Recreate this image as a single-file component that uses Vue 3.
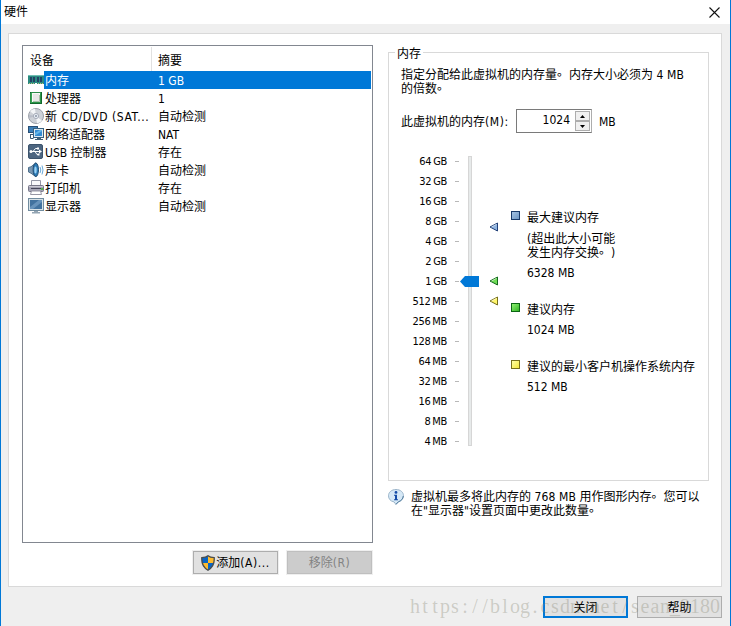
<script setup>
const devices = [
  { icon: 'memory', name: '内存', summary: '1 GB', selected: true },
  { icon: 'cpu', name: '处理器', summary: '1' },
  { icon: 'disc', name: '新 CD/DVD (SAT...', summary: '自动检测', wide: true },
  { icon: 'network', name: '网络适配器', summary: 'NAT' },
  { icon: 'usb', name: 'USB 控制器', summary: '存在' },
  { icon: 'sound', name: '声卡', summary: '自动检测' },
  { icon: 'printer', name: '打印机', summary: '存在' },
  { icon: 'display', name: '显示器', summary: '自动检测' },
]
const scale = ['64 GB', '32 GB', '16 GB', '8 GB', '4 GB', '2 GB', '1 GB', '512 MB', '256 MB', '128 MB', '64 MB', '32 MB', '16 MB', '8 MB', '4 MB']
const markers = [
  { cls: 'm-max', fill: '#8fb4e0', stroke: '#1f3f77' },
  { cls: 'm-rec', fill: '#6fdc55', stroke: '#12691c' },
  { cls: 'm-min', fill: '#fff56a', stroke: '#77701c' },
]
const watermark = 'https://blog.csdn.net/sean_9180'
// one fixed-width cell per character
const cells = [...watermark].map((_, i) => i * 10 + 5).join(' ')
</script>

<template>
  <div class="window">
    <header class="titlebar">
      <span>硬件</span>
      <svg class="close" width="11" height="11" viewBox="0 0 11 11"><path d="M.5 .5l10 10M10.5 .5l-10 10" stroke="#111" stroke-width="1.1" fill="none" /></svg>
    </header>

    <main class="panel">
      <section class="left">
        <div class="list">
          <div class="head"><span class="h1">设备</span><span class="h2">摘要</span></div>
          <div v-for="d in devices" :key="d.icon" class="row" :class="{ selected: d.selected, wide: d.wide }">
            <svg class="icon" width="16" height="16" viewBox="0 0 16 16">
              <g v-if="d.icon === 'memory'">
                <path d="M0 3h16v9H9v-1H7v1H0z" fill="#2b8a80" />
                <path d="M0 3.500h16" stroke="#70bdb2" />
                <path d="M2 5h2v5H2zM5 5h2v5H5zM9 5h2v5H9zM12 5h2v5h-2z" fill="#234264" />
                <path d="M1 11.500h5M10 11.500h6" stroke="#bcc27c" stroke-dasharray="1 1" />
              </g>
              <g v-else-if="d.icon === 'cpu'">
                <rect x="2.500" y="2.500" width="11" height="11" fill="#299447" stroke="#12672c" />
                <path d="M3 13V3h10" stroke="#48b565" fill="none" />
                <rect x="4.500" y="3.500" width="7" height="8" fill="#e7e7e5" stroke="#f8faf6" />
                <path d="M5 11.500h6.500V5" stroke="#a7bfa8" fill="none" />
              </g>
              <g v-else-if="d.icon === 'disc'">
                <circle cx="8" cy="8" r="7.500" fill="#cdd1d7" stroke="#9b9fa8" />
                <path d="M8 8L2 3.200A7.300 7.300 0 0 1 7 .8zM8 8l6 4.800a7.300 7.300 0 0 1-5 2.500z" fill="#f3f5f7" />
                <path d="M8 8L1 7a7 7 0 0 0 0 3z" fill="#b8bdc8" />
                <circle cx="8" cy="8" r="2.600" fill="#e8edf4" stroke="#a8aeba" />
                <circle cx="8" cy="8" r="1" fill="#8993a5" />
              </g>
              <g v-else-if="d.icon === 'network'">
                <rect x=".5" y=".5" width="9" height="6" fill="#3c7fb7" stroke="#274f77" />
                <path d="M2 8.500h3M2.500 9v3.500h3" stroke="#38576f" fill="none" />
                <rect x="5.500" y="2.500" width="10" height="9" fill="#d9e8f2" stroke="#376080" />
                <rect x="7" y="4" width="7" height="6" fill="#338bd1" />
                <path d="M7 7l5-3h2v1L8 9H7z" fill="#65b7e8" />
                <path d="M9 12.500h4M7 13.500h8" stroke="#416178" />
              </g>
              <g v-else-if="d.icon === 'usb'">
                <rect x=".5" y=".5" width="14" height="14" rx="1.500" fill="#4c6580" stroke="#3c536c" />
                <path d="M2 7.500h10M5 7.500l2.500-3h2M7 7.500l2 3h2" stroke="#fff" fill="none" />
                <circle cx="3" cy="7.500" r="1.500" fill="#fff" /><path d="M11 5.500l3 2-3 2zM9 3.500h2v2H9zM9.500 9.500h2v2h-2z" fill="#fff" />
              </g>
              <g v-else-if="d.icon === 'sound'">
                <path d="M.5 5.500L3 4.800 8 .8c2 2 2 11 0 14L3 11.200.5 10z" fill="#7897b2" stroke="#4d708d" />
                <ellipse cx="7.800" cy="7.800" rx="2.700" ry="6.700" fill="#2c7cb7" stroke="#274f73" />
                <ellipse cx="7.500" cy="8" rx="1.200" ry="3.500" fill="#9cd3f5" />
                <path d="M12 5q1.600 3 0 6M14 3.500q2 4.500 0 9" stroke="#6baad8" fill="none" />
              </g>
              <g v-else-if="d.icon === 'printer'">
                <path d="M3.500 6V.5h9V6" fill="#f8f8fc" stroke="#9497a7" />
                <rect x=".5" y="5.500" width="15" height="6" rx="1" fill="#a5a4b5" stroke="#777688" />
                <path d="M1 6.500h14" stroke="#cac9d5" /><path d="M3 8.500h10" stroke="#45455a" />
                <rect x="13" y="8" width="2" height="2" fill="#55b84a" />
                <path d="M3.500 11h9l1 3.500h-11z" fill="#fff" stroke="#9797a5" />
              </g>
              <g v-else>
                <rect x=".5" y=".5" width="15" height="12" fill="#d8e2e7" stroke="#718c9f" />
                <rect x="2" y="2" width="12" height="9" fill="#41729f" /><path d="M2 9l9-7h3v2L5 11H2z" fill="#6793bb" />
                <path d="M6 13h4v1h2v1.500H4V14h2z" fill="#94a5b3" />
              </g>
            </svg>
            <span class="name">{{ d.name }}</span>
            <span class="summary">{{ d.summary }}</span>
          </div>
        </div>
        <div class="actions">
          <button class="btn add">
            <svg width="14" height="16" viewBox="0 0 14 16">
              <path d="M7 .7C5 2.300 3 2.500.8 2.700c-.4 6 1.500 10 6.200 12.500 4.700-2.500 6.600-6.500 6.200-12.500C11 2.500 9 2.300 7 .7z" fill="#0865c5" />
              <path d="M7 1v7h6c.3-2 .2-3 .2-5.300C11 2.500 9 2.300 7 1zM7 8H1.200C2 11 3.500 13.500 7 15z" fill="#fdbb2e" />
              <path d="M7 .7C5 2.300 3 2.500.8 2.700c-.4 6 1.500 10 6.200 12.500 4.700-2.500 6.600-6.500 6.200-12.500C11 2.500 9 2.300 7 .7z" fill="none" stroke="#4b4d4d" stroke-width="1.300" />
            </svg>
            <span>添加<span class="key">(A)...</span></span>
          </button>
          <button class="btn disabled" disabled><span>移除<span class="key">(R)</span></span></button>
        </div>
      </section>

      <section class="right">
        <div class="group">
          <span class="caption">内存</span>
          <p class="desc">指定分配给此虚拟机的内存量<span class="stop">。</span>内存大小必须为 <span class="num">4 MB</span><br>的倍数<span class="stop">。</span></p>
          <div class="amount">
            <label>此虚拟机的内存<span class="key">(M):</span></label>
            <div class="spin">
              <span class="value">1024</span>
              <div class="arrows">
                <i><svg width="5" height="3" viewBox="0 0 5 3"><path d="M0 3L2.500 0 5 3z" /></svg></i>
                <i><svg width="5" height="3" viewBox="0 0 5 3"><path d="M0 0l2.500 3L5 0z" /></svg></i>
              </div>
            </div>
            <span class="unit">MB</span>
          </div>
          <div class="slider">
            <div class="scale">
              <div v-for="s in scale" :key="s" class="tick"><span>{{ s }}</span><i></i></div>
            </div>
            <div class="track">
              <svg class="thumb" width="19" height="11" viewBox="0 0 19 11"><path d="M0 5.500L5 0h14v11H5z" fill="#0078d7" /></svg>
            </div>
            <div class="markers">
              <svg v-for="m in markers" :key="m.cls" :class="m.cls" width="10" height="10" viewBox="0 0 10 10">
                <path d="M1 5L8.500 1v8z" :fill="m.fill" :stroke="m.stroke" /><path d="M2.500 5L7.500 2.300" stroke="#fff" stroke-opacity=".6" />
              </svg>
            </div>
            <div class="legend">
              <div class="item max"><i></i><div><p>最大建议内存</p><p>(超出此大小可能<br>发生内存交换<span class="stop">。</span>)</p><p>6328 MB</p></div></div>
              <div class="item rec"><i></i><div><p>建议内存</p><p>1024 MB</p></div></div>
              <div class="item min"><i></i><div><p>建议的最小客户机操作系统内存</p><p>512 MB</p></div></div>
            </div>
          </div>
        </div>
        <div class="info">
          <svg width="16" height="16" viewBox="0 0 16 16">
            <path d="M8 .5c4.500 0 7.500 2.800 7.500 6.300 0 3-2.200 5.200-5 6L8 15.500 6 12.900C2.500 12.300.5 9.800.5 6.800.5 3.300 3.500.5 8 .5z" fill="#d5e8f6" stroke="#9cb5ca" />
            <path d="M15.300 7c-.3 3-2.300 5-5 5.800L8 15.300" stroke="#537d9e" fill="none" />
            <circle cx="8" cy="3.400" r="1.400" fill="#144ba7" /><path d="M6 5.800h3v4.500h1v1H6v-1h1V6.800H6z" fill="#144ba7" />
          </svg>
          <p>虚拟机最多将此内存的 <span class="num">768 MB</span> 用作图形内存<span class="stop">。</span>您可以<br>在"显示器"设置页面中更改此数量<span class="stop">。</span></p>
        </div>
      </section>
    </main>

    <footer class="footer">
      <button class="btn primary">关闭</button>
      <button class="btn">帮助</button>
    </footer>
    <svg class="watermark" width="312" height="28"><text :x="cells" y="19">{{ watermark }}</text></svg>
  </div>
</template>

<style>
body { margin: 0; overflow: hidden; }
</style>

<style scoped>
* { box-sizing: border-box; }
p { margin: 0; }
svg { display: block; flex: none; }
.window { position: relative; width: 731px; height: 626px; background: #efefef; border: solid #0078d7; border-width: 0 1px; font: 12px/14px "DejaVu Sans Condensed", "Noto Sans CJK SC", sans-serif; text-spacing-trim: space-all; color: #000; white-space: nowrap; }
.titlebar { height: 24px; background: #fff; display: flex; justify-content: space-between; align-items: center; padding: 0 10px 1px 3px; }
.close { margin-top: 1px; }
.panel { margin: 9px 8px 0 7px; height: 554px; background: #fff; border: 1px solid #d9d9d9; display: flex; padding: 11px 12px 0 13px; }
.left { width: 351px; }
.list { height: 498px; border: 1px solid #828790; padding: 1px; }
.head { height: 24px; display: flex; }
.h1 { width: 128px; height: 24px; line-height: 28px; padding-left: 6px; border-right: 1px solid #e1e1e1; }
.h2 { height: 24px; line-height: 28px; padding-left: 6px; }
.row { height: 18px; display: flex; align-items: center; padding-left: 4px; }
.name { width: 112px; height: 18px; line-height: 20px; padding-left: 1px; }
.summary { flex: 1; height: 18px; line-height: 20px; padding-left: 2px; }
.wide .name { letter-spacing: .55px; }
.selected .name, .selected .summary { background: #0078d7; color: #fff; }
.key { letter-spacing: .6px; }
.num { letter-spacing: .15px; }
.stop { vertical-align: 3px; line-height: 0; }
.actions { display: flex; justify-content: flex-end; gap: 9px; padding: 8px 1px 0 0; }
.btn { height: 23px; border: 1px solid #adadad; background: #e1e1e1; padding: 1px 0 0; font: inherit; color: #000; display: flex; align-items: center; justify-content: center; }
.actions .btn { outline: 1px solid #efefef; width: 85px; }
.add { gap: 1px; }
.btn.disabled { background: #ccc; border-color: #bfbfbf; color: #838383; }
.right { width: 321px; margin-left: 15px; padding-top: 7px; }
.group { position: relative; height: 429px; border: 1px solid #d9d9d9; padding: 15px 0 0 12px; }
.caption { position: absolute; left: 6px; top: -6px; background: #fff; padding: 0 2px; }
.amount { display: flex; align-items: center; height: 24px; margin-top: 13px; }
.amount label { width: 115px; padding-top: 2px; }
.unit { padding-top: 1px; }
.spin { width: 76px; height: 24px; border: 1px solid #7a7a7a; border-right-color: #adadad; display: flex; padding: 1px; margin-right: 7px; }
.value { flex: 1; text-align: right; padding: 2px 5px 0 0; }
.arrows { width: 15px; display: grid; grid-template-rows: 10px 10px; }
.arrows i { background: #f0f0f0; border: 1px solid #adadad; display: flex; align-items: center; justify-content: center; }
.slider { display: flex; margin-top: 18px; }
.scale { width: 59px; }
.tick { height: 20px; display: flex; align-items: center; font-size: 11px; letter-spacing: -.3px; }
.tick span { width: 46px; text-align: right; margin-right: 8px; padding-top: 2px; word-spacing: -1px; }
.tick i { width: 4px; height: 1px; background: #b8b8b8; }
.track { position: relative; width: 4px; height: 290px; margin: 5px 17px 0 8px; background: #e7eaea; border: 1px solid #d6d6d6; }
.thumb { position: absolute; left: -9px; top: 119px; }
.markers { width: 10px; padding-top: 71px; }
.m-rec { margin-top: 44px; }
.m-min { margin-top: 10px; }
.legend { padding: 60px 0 0 12px; }
.item { display: flex; gap: 7px; }
.item > i { width: 9px; height: 9px; border: 1px solid #183a6a; background: linear-gradient(135deg, #a3c2e3, #6f98c5); }
.item > div > p + p { margin-top: 7px; }
.item > div > p:last-child:not(:nth-child(3)) { margin-top: 6px; }
.item > div > p:nth-child(3) { margin-top: 6px; }
.rec { margin-top: 23px; }
.min { margin-top: 23px; }
.rec > i { border-color: #0b6613; background: linear-gradient(135deg, #8df172, #35b526); }
.min > i { border-color: #77701c; background: linear-gradient(135deg, #ffffa6, #f5e83d); }
.info { display: flex; gap: 7px; margin-top: 9px; }
.info svg { margin-top: -1px; }
.footer { display: flex; justify-content: flex-end; gap: 9px; padding: 9px 8px 0 0; }
.footer .btn { width: 85px; height: 22px; padding-top: 2px; }
.footer .primary { border: 2px solid #0078d7; }
.watermark { position: absolute; left: 409px; top: 594px; pointer-events: none; }
.watermark text { font: 20px "Liberation Serif", serif; text-anchor: middle; fill: rgba(130, 130, 110, .32); }
</style>
